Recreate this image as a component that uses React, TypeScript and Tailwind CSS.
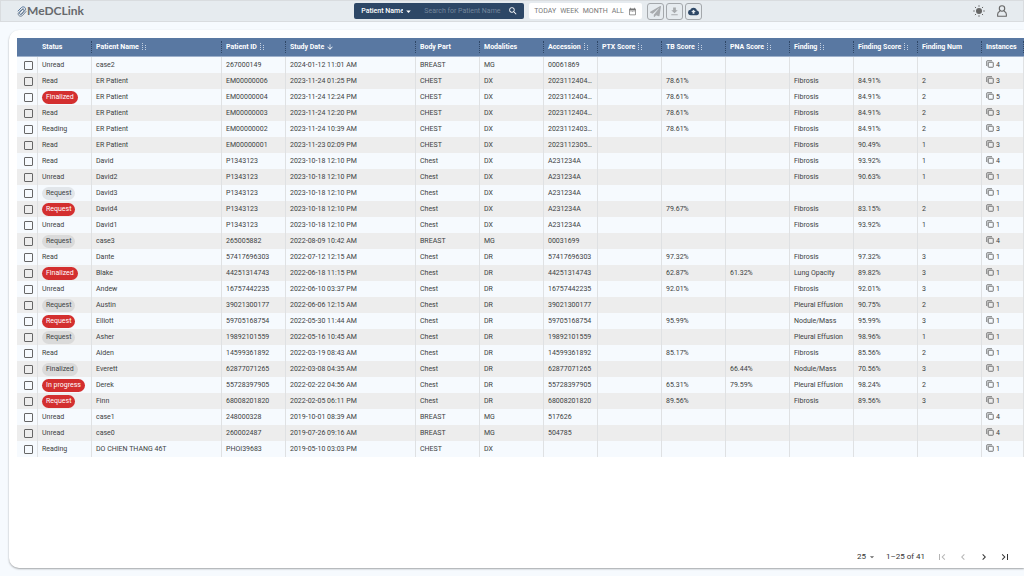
import React, { useState } from 'react';
import { FaPaperPlane } from 'react-icons/fa';
import {
  MdArrowDownward,
  MdArrowDropDown,
  MdChevronLeft,
  MdChevronRight,
  MdCloudUpload,
  MdDateRange,
  MdFileDownload,
  MdFirstPage,
  MdLastPage,
  MdSearch,
} from 'react-icons/md';

type Tone = 'plain' | 'grey' | 'red';

type Study = {
  status: string;
  tone: Tone;
  name: string;
  id: string;
  date: string;
  part: string;
  modality: string;
  accession: string;
  tb: string;
  pna: string;
  finding: string;
  score: string;
  num: string;
  instances: string;
};

// status|tone|name|id|date|part|modality|accession|tb|pna|finding|score|num|instances
const RAW = `Unread|plain|case2|267000149|2024-01-12 11:01 AM|BREAST|MG|00061869||||||4
Read|plain|ER Patient|EM00000006|2023-11-24 01:25 PM|CHEST|DX|2023112404…|78.61%||Fibrosis|84.91%|2|3
Finalized|red|ER Patient|EM00000004|2023-11-24 12:24 PM|CHEST|DX|2023112404…|78.61%||Fibrosis|84.91%|2|5
Read|plain|ER Patient|EM00000003|2023-11-24 12:20 PM|CHEST|DX|2023112404…|78.61%||Fibrosis|84.91%|2|3
Reading|plain|ER Patient|EM00000002|2023-11-24 10:39 AM|CHEST|DX|2023112403…|78.61%||Fibrosis|84.91%|2|3
Read|plain|ER Patient|EM00000001|2023-11-23 02:09 PM|CHEST|DX|2023112305…|||Fibrosis|90.49%|1|3
Read|plain|David|P1343123|2023-10-18 12:10 PM|Chest|DX|A231234A|||Fibrosis|93.92%|1|4
Unread|plain|David2|P1343123|2023-10-18 12:10 PM|Chest|DX|A231234A|||Fibrosis|90.63%|1|1
Request|grey|David3|P1343123|2023-10-18 12:10 PM|Chest|DX|A231234A||||||1
Request|red|David4|P1343123|2023-10-18 12:10 PM|Chest|DX|A231234A|79.67%||Fibrosis|83.15%|2|1
Unread|plain|David1|P1343123|2023-10-18 12:10 PM|Chest|DX|A231234A|||Fibrosis|93.92%|1|1
Request|grey|case3|265005882|2022-08-09 10:42 AM|BREAST|MG|00031699||||||4
Read|plain|Dante|57417696303|2022-07-12 12:15 AM|Chest|DR|57417696303|97.32%||Fibrosis|97.32%|3|1
Finalized|red|Blake|44251314743|2022-06-18 11:15 PM|Chest|DR|44251314743|62.87%|61.32%|Lung Opacity|89.82%|3|1
Unread|plain|Andew|16757442235|2022-06-10 03:37 PM|Chest|DR|16757442235|92.01%||Fibrosis|92.01%|3|1
Request|grey|Austin|39021300177|2022-06-06 12:15 AM|Chest|DR|39021300177|||Pleural Effusion|90.75%|2|1
Request|red|Elliott|59705168754|2022-05-30 11:44 AM|Chest|DR|59705168754|95.99%||Nodule/Mass|95.99%|3|1
Request|grey|Asher|19892101559|2022-05-16 10:45 AM|Chest|DR|19892101559|||Pleural Effusion|98.96%|1|1
Read|plain|Aiden|14599361892|2022-03-19 08:43 AM|Chest|DR|14599361892|85.17%||Fibrosis|85.56%|2|1
Finalized|grey|Everett|62877071265|2022-03-08 04:35 AM|Chest|DR|62877071265||66.44%|Nodule/Mass|70.56%|3|1
In progress|red|Derek|55728397905|2022-02-22 04:56 AM|Chest|DR|55728397905|65.31%|79.59%|Pleural Effusion|98.24%|2|1
Request|red|Finn|68008201820|2022-02-05 06:11 PM|Chest|DR|68008201820|89.56%||Fibrosis|89.56%|3|1
Unread|plain|case1|248000328|2019-10-01 08:39 AM|BREAST|MG|517626||||||4
Unread|plain|case0|260002487|2019-07-26 09:16 AM|BREAST|MG|504785||||||4
Reading|plain|DO CHIEN THANG 46T|PHOI39683|2019-05-10 03:03 PM|CHEST|DX|||||||1`;

const STUDIES: Study[] = RAW.split('\n').map((line) => {
  const [status, tone, name, id, date, part, modality, accession, tb, pna, finding, score, num, instances] = line.split('|');
  return { status, tone: tone as Tone, name, id, date, part, modality, accession, tb, pna, finding, score, num, instances };
});

const COLUMNS: { label: string; width: string; sort?: 'idle' | 'desc' }[] = [
  { label: 'Status', width: 'w-[54px]' },
  { label: 'Patient Name', width: 'w-[130px]', sort: 'idle' },
  { label: 'Patient ID', width: 'w-[64px]', sort: 'idle' },
  { label: 'Study Date', width: 'w-[130px]', sort: 'desc' },
  { label: 'Body Part', width: 'w-[64px]' },
  { label: 'Modalities', width: 'w-[64px]' },
  { label: 'Accession', width: 'w-[54px]', sort: 'idle' },
  { label: 'PTX Score', width: 'w-[64px]', sort: 'idle' },
  { label: 'TB Score', width: 'w-[64px]', sort: 'idle' },
  { label: 'PNA Score', width: 'w-[64px]', sort: 'idle' },
  { label: 'Finding', width: 'w-[64px]', sort: 'idle' },
  { label: 'Finding Score', width: 'w-[64px]', sort: 'idle' },
  { label: 'Finding Num', width: 'w-[64px]' },
  { label: 'Instances', width: 'w-[42px]' },
];

const CHIP: Record<Tone, string> = {
  plain: '',
  grey: 'inline-block h-[13px] rounded-full bg-black/8 px-1 leading-[13px]',
  red: 'inline-block h-[13px] rounded-full bg-[#d32f2f] px-1 leading-[13px] text-white',
};

// --- ICONS ---
const SortDots = () => (
  <svg viewBox="0 0 6 8" className="h-2 w-[6px] shrink-0" aria-hidden="true">
    <path d="M1.5 0V8" stroke="#c5d0e0" strokeDasharray="1 1" />
    <path d="M4.5 2V8" stroke="#c5d0e0" strokeDasharray="1 1" />
  </svg>
);

const SunIcon = () => (
  <svg viewBox="0 0 24 24" className="size-3" fill="currentColor" aria-hidden="true">
    <circle cx="12" cy="12" r="6" />
    <path
      d="M12 0.5V3.5M12 20.5V23.5M0.5 12H3.5M20.5 12H23.5M3.9 3.9L6 6M18 18L20.1 20.1M3.9 20.1L6 18M18 6L20.1 3.9"
      stroke="currentColor"
      strokeWidth="2"
    />
  </svg>
);

const UserIcon = () => (
  <svg viewBox="0 0 20 24" className="h-3 w-[10px]" fill="none" stroke="currentColor" strokeWidth="2.2" aria-hidden="true">
    <circle cx="10" cy="7" r="5.4" />
    <path d="M6 12.5C3 13.4 1.3 15.6 1.3 18.4V22.4H18.7V18.4C18.7 15.6 17 13.4 14 12.5" strokeLinejoin="round" />
  </svg>
);

const StackIcon = () => (
  <svg viewBox="0 0 16 16" className="mb-[2px] size-2" fill="none" stroke="#666" strokeWidth="1.8" aria-hidden="true">
    <rect x="4.5" y="4.5" width="10" height="10" rx="1" />
    <path d="M1.5 12V2.5C1.5 1.9 1.9 1.5 2.5 1.5H12" />
  </svg>
);

const ClipLogo = () => (
  <svg viewBox="0 0 20 22" className="h-[11px] w-[10px]" fill="none" strokeWidth="2" strokeLinecap="round" aria-hidden="true">
    <path d="M2 10L9 3C12.5 0 18 2.5 17 7.5L9.5 16C7 18.5 3.5 15.5 5.5 12.5L12 6" stroke="#56759c" />
    <path d="M18 11L11 19C7.5 22 1.5 20 2.5 14.5L9.5 7C12 4.5 15.5 7 13.5 10.5L8 17" stroke="#6f7f92" />
  </svg>
);

// --- TOP BAR ---
const ToolButton = ({ label, disabled, children }: { label: string; disabled?: boolean; children: React.ReactNode }) => (
  <button
    aria-label={label}
    disabled={disabled}
    className="flex size-[17px] items-center justify-center rounded-[3px] border border-[#a4a8ac] text-[#2d4766] disabled:text-[#a8abae]"
  >
    {children}
  </button>
);

function TopBar() {
  const [query, setQuery] = useState('');

  return (
    <header className="grid h-[22px] grid-cols-[11fr_auto_10fr] items-center border border-[#d9dcdf] bg-[#e6ebef]">
      <a href="#" className="flex items-center pl-4 font-[Lato,sans-serif] text-[12px] leading-4 font-bold text-[#66696d]">
        <ClipLogo />
        MeDCLink
      </a>

      <div className="flex items-center">
        <div className="flex h-4 w-[170px] items-center rounded-[2px] bg-[#2d4766] pl-[7px] text-white">
          <div className="flex w-[63px] items-center">
            <select aria-label="Search field" className="w-[42px] appearance-none text-[7px] font-medium outline-none">
              <option>Patient Name</option>
            </select>
            <MdArrowDropDown size={11} className="shrink-0" />
          </div>
          <input
            aria-label="Search"
            value={query}
            onChange={(e) => setQuery(e.target.value)}
            placeholder="Search for Patient Name"
            className="w-0 flex-1 text-[7px] outline-none placeholder:text-[#74869c]"
          />
          <button aria-label="Run search" className="px-[6px]">
            <MdSearch size={10} />
          </button>
        </div>

        <div className="ml-[5px] flex h-4 items-center gap-1 rounded-[2px] bg-white px-[5px] text-[7px] text-[#777]">
          <button>TODAY</button>
          <button>WEEK</button>
          <button>MONTH</button>
          <button>ALL</button>
          <button aria-label="Pick date">
            <MdDateRange size={9} />
          </button>
        </div>

        <div className="ml-[5px] flex gap-[2px]">
          <ToolButton label="Send" disabled>
            <FaPaperPlane size={11} />
          </ToolButton>
          <ToolButton label="Download" disabled>
            <MdFileDownload size={11} />
          </ToolButton>
          <ToolButton label="Upload">
            <MdCloudUpload size={11} />
          </ToolButton>
        </div>
      </div>

      <div className="flex items-center justify-end gap-3 pr-4 text-[#666]">
        <button aria-label="Toggle theme">
          <SunIcon />
        </button>
        <button aria-label="Account">
          <UserIcon />
        </button>
      </div>
    </header>
  );
}

// --- STUDY TABLE ---
const CheckBox = ({ label }: { label: string }) => (
  <input
    type="checkbox"
    aria-label={label}
    className="block size-[9px] appearance-none rounded-[1px] border border-[#666] checked:bg-[#5978a2]"
  />
);

function StudyTable() {
  return (
    <table className="w-full table-fixed border-separate border-spacing-0 text-left text-[7px] leading-[8px] whitespace-nowrap text-[#3c3f42]">
      <thead>
        <tr className="h-[19px] bg-[#5978a2] text-white">
          <th className="w-[21px] border-b border-[#9db0cb]" />
          {COLUMNS.map((col) => (
            <th key={col.label} className={`${col.width} border-b border-[#9db0cb] pl-1 font-bold`}>
              <div className="flex h-3 items-center justify-between border-r border-dotted border-[#2f4767]">
                <span className="flex items-center gap-[2px]">
                  {col.label}
                  {col.sort === 'idle' && <SortDots />}
                  {col.sort === 'desc' && <MdArrowDownward size={8} />}
                </span>
              </div>
            </th>
          ))}
        </tr>
      </thead>
      <tbody>
        {STUDIES.map((s, i) => (
          <tr
            key={i}
            className="h-4 odd:bg-[#f6fafe] even:bg-[#ededed] [&>td]:border-r [&>td]:border-[#dfe1e3] [&>td]:p-0 [&>td+td]:pl-1"
          >
            <td>
              <div className="flex justify-end pr-1">
                <CheckBox label={`Select ${s.name}`} />
              </div>
            </td>
            <td>
              <span className={CHIP[s.tone]}>{s.status}</span>
            </td>
            <td>{s.name}</td>
            <td>{s.id}</td>
            <td>{s.date}</td>
            <td>{s.part}</td>
            <td>{s.modality}</td>
            <td>{s.accession}</td>
            <td />
            <td>{s.tb}</td>
            <td>{s.pna}</td>
            <td>{s.finding}</td>
            <td>{s.score}</td>
            <td>{s.num}</td>
            <td>
              <span className="flex items-center gap-[2px]">
                <StackIcon />
                {s.instances}
              </span>
            </td>
          </tr>
        ))}
      </tbody>
    </table>
  );
}

function Pagination() {
  return (
    <footer className="mt-auto flex h-[23px] items-center justify-end pr-[13px] text-[8px] text-[#333]">
      <select aria-label="Rows per page" className="w-[10px] appearance-none outline-none" defaultValue="25">
        <option>25</option>
        <option>50</option>
      </select>
      <MdArrowDropDown size={10} className="mr-[9px] text-[#666]" />
      <span>1–25 of 41</span>
      <div className="ml-[11px] flex gap-[9px]">
        <button aria-label="First page" disabled className="disabled:text-[#b5b5b5]">
          <MdFirstPage size={12} />
        </button>
        <button aria-label="Previous page" disabled className="disabled:text-[#b5b5b5]">
          <MdChevronLeft size={12} />
        </button>
        <button aria-label="Next page">
          <MdChevronRight size={12} />
        </button>
        <button aria-label="Last page">
          <MdLastPage size={12} />
        </button>
      </div>
    </footer>
  );
}

export default function App() {
  return (
    <div className="flex min-h-screen flex-col bg-[#f6fafe] font-[Roboto,sans-serif]">
      <TopBar />
      <main className="flex flex-1 flex-col pt-2 pb-2 pl-[9px]">
        <section className="flex flex-1 flex-col rounded-l-[10px] bg-white pt-2 pl-2 shadow-[0_1px_2px_rgba(0,0,0,0.35)]">
          <StudyTable />
          <Pagination />
        </section>
      </main>
    </div>
  );
}
